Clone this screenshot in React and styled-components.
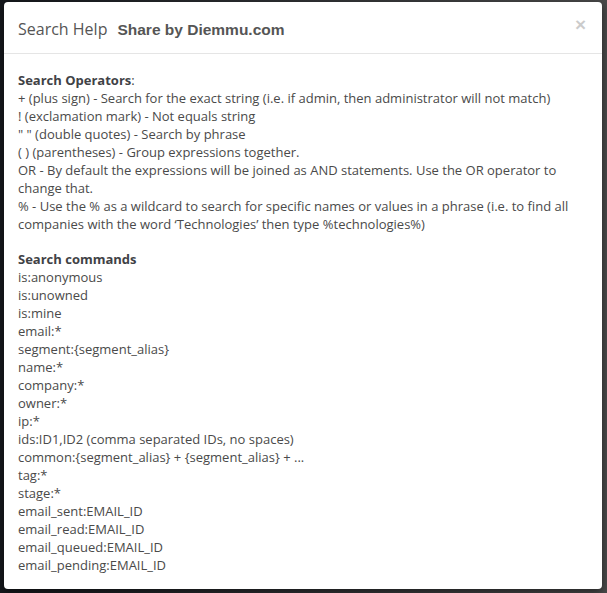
import React from "react";
import styled, { createGlobalStyle } from "styled-components";

const Global = createGlobalStyle`
  html, body { margin: 0; padding: 0; }
  body {
    background: linear-gradient(to right, #15181c 0%, #2a2c2f 40%, #4a4a4a 100%);
    font-family: "Open Sans", "Noto Sans", sans-serif;
  }
`;

const Backdrop = styled.div`
  width: 607px;
  height: 593px;
  box-sizing: border-box;
  padding: 2px 5px 4px 4px;
  display: flex;
`;

const Modal = styled.div`
  flex: 1;
  background: #fff;
  border-radius: 4px;
  box-shadow: 0 3px 9px rgba(0, 0, 0, 0.5);
  display: flex;
  flex-direction: column;
  overflow: hidden;
`;

const Header = styled.div`
  display: flex;
  align-items: center;
  height: 52px;
  padding: 2px 15px 0 14px;
  box-sizing: border-box;
  border-bottom: 1px solid #e5e5e5;
`;

const Title = styled.h4`
  margin: 0;
  font-family: "Open Sans", sans-serif;
  font-weight: 400;
  font-size: 16px;
  color: #555;
  display: flex;
  align-items: baseline;
  gap: 10px;
  flex: 1;
`;

const Brand = styled.span`
  font-family: "Liberation Sans", Arial, sans-serif;
  font-weight: 700;
  font-size: 15.5px;
  color: #555;
`;

const Close = styled.button`
  border: 0;
  background: none;
  padding: 0;
  font-family: "Liberation Sans", Arial, sans-serif;
  font-size: 19px;
  font-weight: 700;
  line-height: 1;
  color: #000;
  opacity: 0.2;
  margin-top: -8px;
  margin-right: 1px;
  cursor: pointer;
`;

const Body = styled.div`
  padding: 17px 15px 15px 14px;
  font-size: 13px;
  line-height: 18px;
  color: #4a4a4a;
`;

const Section = styled.div`
  & + & {
    margin-top: 17px;
  }
`;

const Heading = styled.div`
  font-weight: 700;
  color: #3f4246;
`;

const Colon = styled.span`
  font-weight: 400;
`;

const Line = styled.div``;

const operators = [
  "+ (plus sign) - Search for the exact string (i.e. if admin, then administrator will not match)",
  "! (exclamation mark) - Not equals string",
  "\" \" (double quotes) - Search by phrase",
  "( ) (parentheses) - Group expressions together.",
  "OR - By default the expressions will be joined as AND statements. Use the OR operator to change that.",
  "% - Use the % as a wildcard to search for specific names or values in a phrase (i.e. to find all companies with the word \u2018Technologies\u2019 then type %technologies%)",
];

const commands = [
  "is:anonymous",
  "is:unowned",
  "is:mine",
  "email:*",
  "segment:{segment_alias}",
  "name:*",
  "company:*",
  "owner:*",
  "ip:*",
  "ids:ID1,ID2 (comma separated IDs, no spaces)",
  "common:{segment_alias} + {segment_alias} + ...",
  "tag:*",
  "stage:*",
  "email_sent:EMAIL_ID",
  "email_read:EMAIL_ID",
  "email_queued:EMAIL_ID",
  "email_pending:EMAIL_ID",
];

export default function App() {
  return (
    <>
      <Global />
      <Backdrop>
        <Modal>
          <Header>
            <Title>
              Search Help <Brand>Share by Diemmu.com</Brand>
            </Title>
            <Close aria-label="Close">×</Close>
          </Header>
          <Body>
            <Section>
              <Heading>
                Search Operators<Colon>:</Colon>
              </Heading>
              {operators.map((t) => (
                <Line key={t}>{t}</Line>
              ))}
            </Section>
            <Section>
              <Heading>Search commands</Heading>
              {commands.map((t) => (
                <Line key={t}>{t}</Line>
              ))}
            </Section>
          </Body>
        </Modal>
      </Backdrop>
    </>
  );
}
